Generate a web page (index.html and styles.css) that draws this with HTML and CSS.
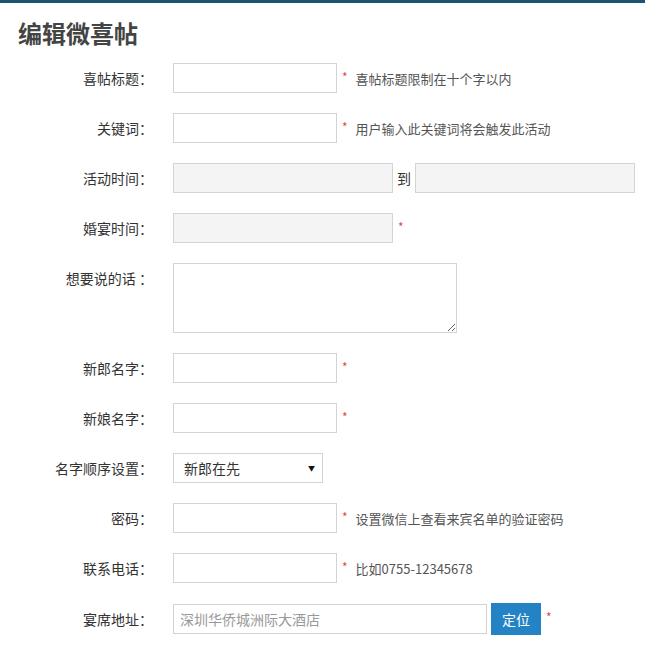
FILE: index.html
```html
<!DOCTYPE html>
<html lang="zh-CN">
<head>
<meta charset="UTF-8">
<title>编辑微喜帖</title>
<link rel="stylesheet" href="styles.css">
</head>
<body>
<div class="topbar"></div>
<h1 class="title">编辑微喜帖</h1>
<form class="form">
  <div class="row">
    <label class="lbl">喜帖标题：</label>
    <input class="ipt" type="text">
    <span class="req">*</span><span class="tip">喜帖标题限制在十个字以内</span>
  </div>
  <div class="row">
    <label class="lbl">关键词：</label>
    <input class="ipt" type="text">
    <span class="req">*</span><span class="tip">用户输入此关键词将会触发此活动</span>
  </div>
  <div class="row">
    <label class="lbl">活动时间：</label>
    <input class="ipt ipt-date" type="text" disabled>
    <span class="to">到</span>
    <input class="ipt ipt-date" type="text" disabled>
  </div>
  <div class="row">
    <label class="lbl">婚宴时间：</label>
    <input class="ipt ipt-date" type="text" disabled>
    <span class="req">*</span>
  </div>
  <div class="row row-top">
    <label class="lbl">想要说的话 ：</label>
    <textarea class="txt"></textarea>
  </div>
  <div class="row">
    <label class="lbl">新郎名字：</label>
    <input class="ipt" type="text">
    <span class="req">*</span>
  </div>
  <div class="row">
    <label class="lbl">新娘名字：</label>
    <input class="ipt" type="text">
    <span class="req">*</span>
  </div>
  <div class="row">
    <label class="lbl">名字顺序设置：</label>
    <div class="sel-wrap">
      <select class="sel">
        <option>新郎在先</option>
        <option>新娘在先</option>
      </select>
      <span class="arrow">▼</span>
    </div>
  </div>
  <div class="row">
    <label class="lbl">密码：</label>
    <input class="ipt" type="text">
    <span class="req">*</span><span class="tip">设置微信上查看来宾名单的验证密码</span>
  </div>
  <div class="row">
    <label class="lbl">联系电话：</label>
    <input class="ipt" type="text">
    <span class="req">*</span><span class="tip">比如0755-12345678</span>
  </div>
  <div class="row">
    <label class="lbl">宴席地址：</label>
    <input class="ipt ipt-addr" type="text" value="深圳华侨城洲际大酒店">
    <button class="btn" type="button">定位</button>
    <span class="req">*</span>
  </div>
</form>
</body>
</html>
```
FILE: styles.css
```css
html, body {
  margin: 0;
  background: #fff;
}
body {
  font-family: "Noto Sans CJK SC", "Liberation Sans", sans-serif;
  color: #333;
  font-size: 14px;
}
.topbar {
  height: 3px;
  background-color: #1b5372;
}
.title {
  margin: 15px 0 0 18px;
  height: 30px;
  line-height: 30px;
  font-size: 24px;
  font-weight: 700;
  color: #444;
}
.form {
  margin-top: 15px;
}
.row {
  display: flex;
  align-items: center;
  margin-bottom: 20px;
}
.row-top {
  align-items: flex-start;
}
.row-top .lbl {
  line-height: 30px;
}
.lbl {
  width: 153px;
  margin-right: 20px;
  text-align: right;
  font-size: 14px;
  color: #333;
  white-space: pre;
}
.ipt {
  box-sizing: border-box;
  width: 164px;
  height: 30px;
  margin: 0;
  padding: 0 6px;
  border: 1px solid #d3d3d3;
  background: #fff;
  font-family: inherit;
  font-size: 14px;
  outline: none;
}
.ipt-date {
  width: 220px;
  background: #f4f4f4;
}
.ipt-addr {
  width: 314px;
  color: #999;
}
.to {
  margin: 0 4px 0 4px;
  font-size: 14px;
  color: #333;
}
.req {
  align-self: flex-start;
  margin: 8px 0 0 5px;
  color: #e8474c;
  font-size: 12px;
  line-height: 12px;
}
.tip {
  margin-left: 8px;
  font-size: 13px;
  color: #555;
}
.txt {
  box-sizing: border-box;
  width: 284px;
  height: 70px;
  margin: 0;
  border: 1px solid #d3d3d3;
  font-family: inherit;
  font-size: 14px;
  outline: none;
}
.sel-wrap {
  position: relative;
  width: 150px;
  height: 30px;
}
.sel {
  box-sizing: border-box;
  width: 150px;
  height: 30px;
  padding: 0 10px;
  border: 1px solid #d3d3d3;
  border-radius: 0;
  background: #fff;
  font-family: inherit;
  font-size: 14px;
  color: #333;
  appearance: none;
  -webkit-appearance: none;
  outline: none;
}
.arrow {
  position: absolute;
  right: 8px;
  top: 10px;
  font-size: 7px;
  color: #111;
  pointer-events: none;
}
.btn {
  width: 50px;
  height: 32px;
  margin-left: 4px;
  border: 0;
  background: #2383c4;
  color: #fff;
  font-family: inherit;
  font-size: 14px;
}
```
